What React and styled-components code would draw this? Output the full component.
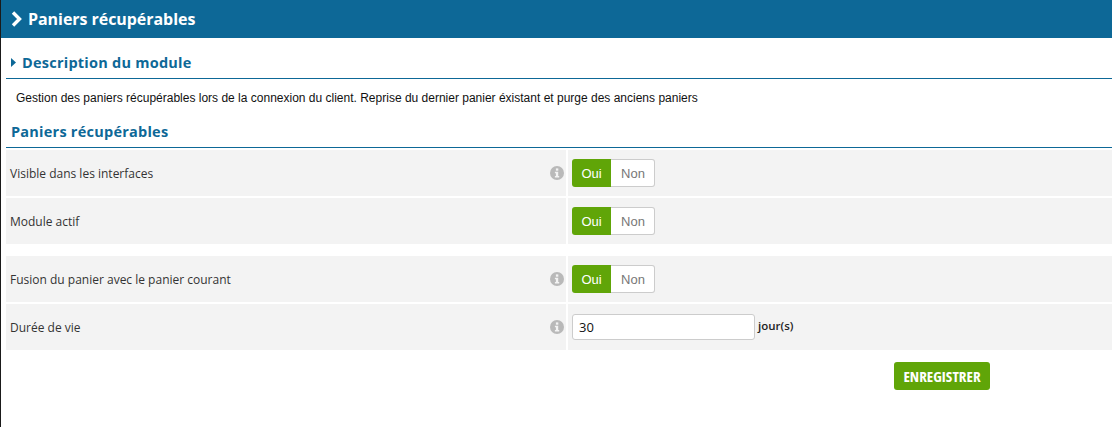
import React from 'react'
import styled, { createGlobalStyle } from 'styled-components'

const GlobalStyle = createGlobalStyle`
  html, body {
    margin: 0;
    padding: 0;
    background: #fff;
    font-family: "Open Sans", sans-serif;
  }
`

const Page = styled.div`
  width: 1112px;
  height: 427px;
  box-sizing: border-box;
  border-left: 1px solid #1a1a1a;
  overflow: hidden;
`

const TopBar = styled.div`
  height: 38px;
  background: #0d6897;
  display: flex;
  align-items: center;
  padding-left: 9px;
  gap: 4px;
  color: #fff;
  font-size: 16px;
  font-weight: 700;
  letter-spacing: -0.05px;
`

const Content = styled.div`
  padding-left: 5px;
`

const SectionTitle = styled.h2`
  margin: 0;
  height: 41px;
  box-sizing: border-box;
  padding: 16px 0 0 ${(p) => p.$indent}px;
  display: flex;
  align-items: flex-start;
  gap: 6px;
  border-bottom: 1px solid #0d6897;
  color: #0d6897;
  font-size: 14.5px;
  line-height: 18px;
  font-weight: 700;
  letter-spacing: 0.24px;
`

const Intro = styled.p`
  margin: 0;
  height: 37px;
  box-sizing: border-box;
  padding: 12px 0 0 10px;
  font-family: "Liberation Sans", Arial, sans-serif;
  font-size: 12px;
  line-height: 15px;
  color: #111;
`

const SubTitle = styled(SectionTitle)`
  height: 32px;
  padding-top: 7px;
`

const Form = styled.div`
  margin-top: 2px;
`

const Row = styled.div`
  display: grid;
  grid-template-columns: 560px 1fr;
  column-gap: 2px;
  height: 46px;
  margin-bottom: ${(p) => p.$after}px;
`

const LabelCell = styled.div`
  background: #f3f3f3;
  display: flex;
  align-items: center;
  justify-content: space-between;
  padding: 0 2px 0 4px;
  font-size: 12px;
  color: #333;
`

const FieldCell = styled.div`
  background: #f3f3f3;
  display: flex;
  align-items: center;
  padding-left: 4px;
`

const Toggle = styled.div`
  display: flex;
  width: 83px;
  height: 28px;
  box-sizing: border-box;
  font-family: "Liberation Sans", Arial, sans-serif;
  font-size: 13px;
`

const ToggleOn = styled.div`
  width: 39px;
  background: #60a508;
  border-radius: 3px 0 0 3px;
  color: #fff;
  display: flex;
  align-items: center;
  justify-content: center;
`

const ToggleOff = styled.div`
  flex: 1;
  background: #fff;
  border: 1px solid #ccc;
  border-left: 0;
  border-radius: 0 3px 3px 0;
  color: #777;
  padding-left: 1px;
  display: flex;
  align-items: center;
  justify-content: center;
`

const NumberInput = styled.input`
  width: 183px;
  height: 26px;
  box-sizing: border-box;
  border: 1px solid #ccc;
  border-radius: 3px;
  padding: 0 6px;
  background: #fff;
  color: #111;
  font-family: "Open Sans", sans-serif;
  font-size: 13px;
  font-weight: 400;
  outline: none;
`

const Unit = styled.span`
  margin-left: 3px;
  margin-top: -3px;
  font-size: 11.5px;
  font-weight: 600;
  color: #222;
`

const Actions = styled.div`
  display: flex;
  justify-content: flex-end;
  padding: 12px 122px 0 0;
`

const SaveButton = styled.button`
  width: 96px;
  height: 28px;
  border: 0;
  border-radius: 3px;
  background: #60a508;
  color: #fff;
  font-family: "Open Sans", sans-serif;
  font-stretch: 75%;
  font-size: 15px;
  font-weight: 700;
  padding: 0;
`

const Chevron = () => (
  <svg width="14" height="16" viewBox="0 0 14 16">
    <path d="M3 1.5 L9.5 8 L3 14.5" fill="none" stroke="#fff" strokeWidth="3.4" />
  </svg>
)

const Caret = () => (
  <svg width="5" height="9" viewBox="0 0 5 9" style={{ marginTop: 4 }}>
    <path d="M0 0 L5 4.5 L0 9 Z" fill="#0d6897" />
  </svg>
)

const InfoIcon = () => (
  <svg width="14" height="14" viewBox="0 0 14 14">
    <circle cx="7" cy="7" r="7" fill="#b9b9b9" />
    <rect x="5.9" y="2.4" width="2.4" height="2.3" fill="#f3f3f3" />
    <path d="M4.9 5.7 H8.2 V9.9 H9.2 V11.4 H4.9 V9.9 H5.9 V7.2 H4.9 Z" fill="#f3f3f3" />
  </svg>
)

const YesNo = () => (
  <Toggle>
    <ToggleOn>Oui</ToggleOn>
    <ToggleOff>Non</ToggleOff>
  </Toggle>
)

const FormRow = ({ label, info, after = 2, children }) => (
  <Row $after={after}>
    <LabelCell>
      <span>{label}</span>
      {info && <InfoIcon />}
    </LabelCell>
    <FieldCell>{children}</FieldCell>
  </Row>
)

export default function App() {
  return (
    <Page>
      <GlobalStyle />
      <TopBar>
        <Chevron />
        Paniers récupérables
      </TopBar>
      <Content>
        <SectionTitle $indent={5}>
          <Caret />
          Description du module
        </SectionTitle>
        <Intro>
          Gestion des paniers récupérables lors de la connexion du client. Reprise du dernier panier éxistant et purge des anciens paniers
        </Intro>
        <SubTitle $indent={5}>Paniers récupérables</SubTitle>
        <Form>
          <FormRow label="Visible dans les interfaces" info>
            <YesNo />
          </FormRow>
          <FormRow label="Module actif" after={12}>
            <YesNo />
          </FormRow>
          <FormRow label="Fusion du panier avec le panier courant" info>
            <YesNo />
          </FormRow>
          <FormRow label="Durée de vie" info after={0}>
            <NumberInput defaultValue="30" />
            <Unit>jour(s)</Unit>
          </FormRow>
        </Form>
        <Actions>
          <SaveButton>ENREGISTRER</SaveButton>
        </Actions>
      </Content>
    </Page>
  )
}
